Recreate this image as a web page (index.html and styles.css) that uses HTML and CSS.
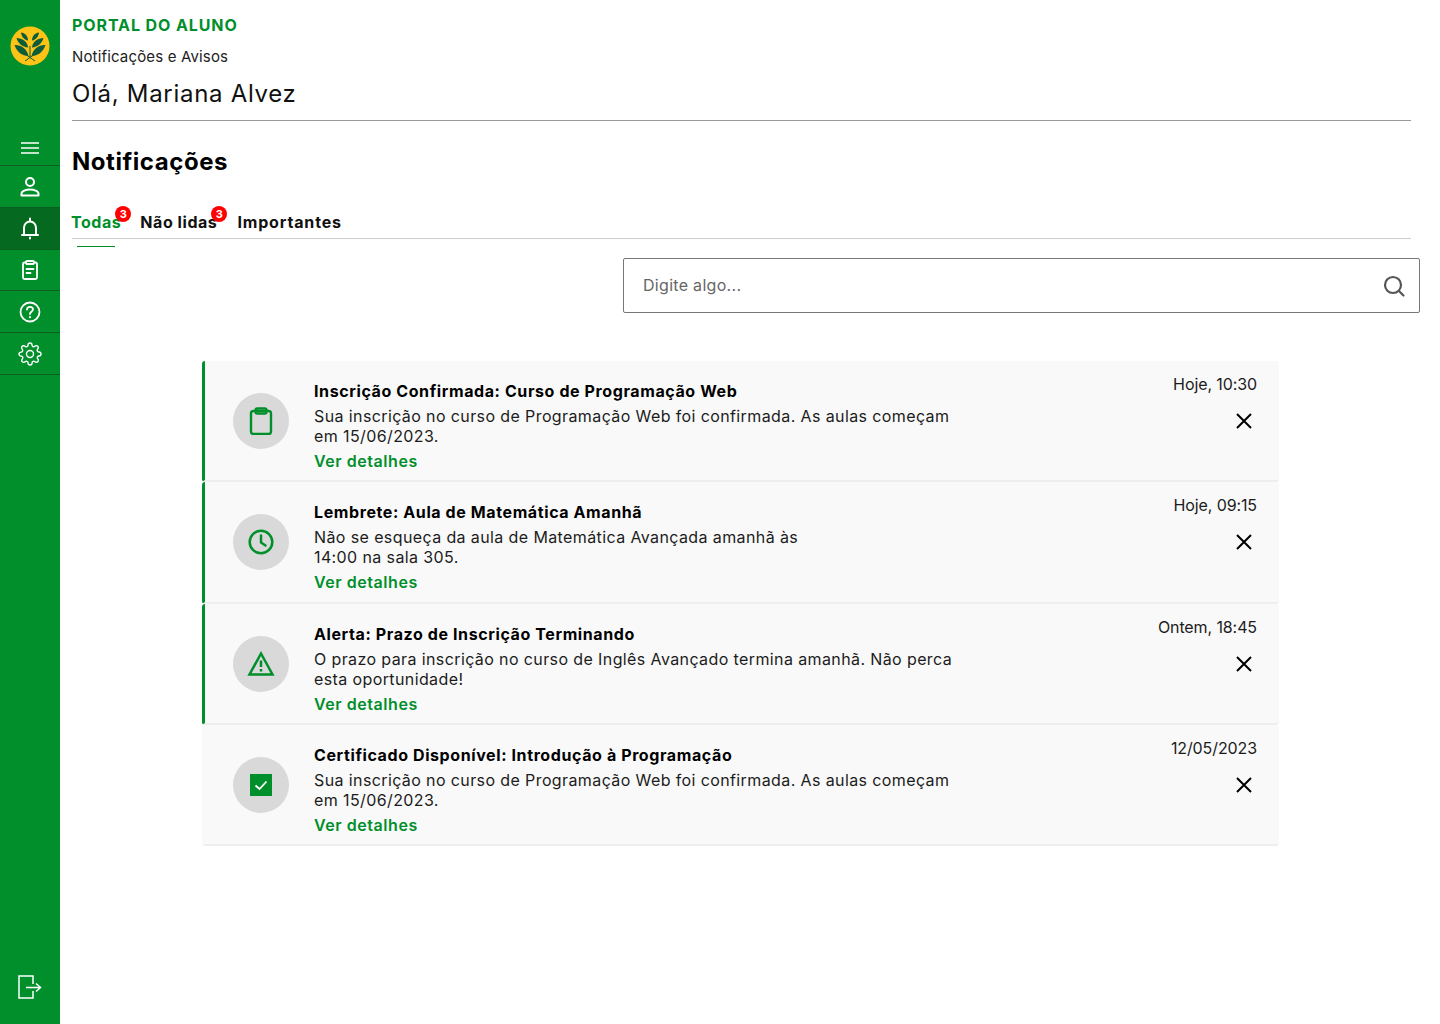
FILE: index.html
```html
<!DOCTYPE html>
<html lang="pt-BR">
<head>
  <meta charset="UTF-8">
  <title>Portal do Aluno - Notificações</title>
  <link rel="stylesheet" href="styles.css">
</head>
<body>
  <!-- barra lateral -->
  <aside class="sidebar">
    <div class="logo">
      <svg width="40" height="40" viewBox="0 0 40 40">
        <circle cx="20" cy="20" r="19.5" fill="#fdc316"/>
        <g fill="#0d5c3a">
          <path d="M18.500 30C12 30 7 26 4.500 19C10 18.500 17 22 18.500 30Z"/>
          <path d="M21.500 30C28 30 33 26 35.500 19C30 18.500 23 22 21.500 30Z"/>
          <path d="M18 21.500C12.500 21 8 17.500 6.500 12C12 12 17.500 15.500 18 21.500Z"/>
          <path d="M22 21.500C27.500 21 32 17.500 33.500 12C28 12 22.500 15.500 22 21.500Z"/>
          <path d="M18 14.500C14 14 11.500 10.500 11 6.500C15 7 18 10 18 14.500Z"/>
          <path d="M22 14.500C26 14 28.500 10.500 29 6.500C25 7 22 10 22 14.500Z"/>
        </g>
        <path d="M15 35L25 28M25 35L15 28M20 20V31" stroke="#0d5c3a" stroke-width="1" fill="none"/>
      </svg>
    </div>
    <nav class="side-nav">
      <a class="side-item side-menu">
        <svg width="20" height="14" viewBox="0 0 20 14"><path d="M1 2H19M1 7H19M1 12H19" stroke="#fff" stroke-width="1.700"/></svg>
      </a>
      <a class="side-item side-low">
        <svg width="24" height="24" viewBox="0 0 24 24" fill="none" stroke="#fff" stroke-width="2"><circle cx="12" cy="7" r="4"/><path d="M3.500 20.500V18.500C3.500 16 8 14.500 12 14.500S20.500 16 20.500 18.500V20.500Z" stroke-linejoin="round"/></svg>
      </a>
      <a class="side-item active">
        <svg width="24" height="24" viewBox="0 0 24 24" fill="none" stroke="#fff" stroke-width="2"><path d="M4 19H20M6 19V12C6 8.500 8.500 5.500 12 5.500S18 8.500 18 12V19" stroke-linecap="round"/><path d="M12 2.500V5M12 21.500V22.500" stroke-linecap="round"/></svg>
      </a>
      <a class="side-item">
        <svg width="24" height="24" viewBox="0 0 24 24" fill="none" stroke="#fff" stroke-width="1.800" stroke-linecap="round" stroke-linejoin="round"><path d="M8 4.500H6.500C5.500 4.500 5 5 5 6V19.500C5 20.500 5.500 21 6.500 21H17.500C18.500 21 19 20.500 19 19.500V6C19 5 18.500 4.500 17.500 4.500H16"/><rect x="8" y="3" width="8" height="3" rx="1"/><path d="M8.500 11H15.500M8.500 15H12.500"/></svg>
      </a>
      <a class="side-item">
        <svg width="24" height="24" viewBox="0 0 24 24" fill="none" stroke="#fff" stroke-width="1.800" stroke-linecap="round"><circle cx="12" cy="12" r="9.500"/><path d="M9 9.500C9 7.800 10.300 6.800 12 6.800S15 8 15 9.500C15 11.500 12 11.500 12 14"/><path d="M12 17V17.200" stroke-width="2.200"/></svg>
      </a>
      <a class="side-item side-low">
        <svg width="24" height="24" viewBox="0 0 24 24" fill="none" stroke="#fff" stroke-width="1.400" stroke-linecap="round" stroke-linejoin="round"><circle cx="12" cy="12" r="3.500"/><path d="M19.400 15a1.650 1.650 0 0 0 .33 1.820l.06.06a2 2 0 0 1 0 2.830 2 2 0 0 1-2.830 0l-.06-.06a1.650 1.650 0 0 0-1.820-.33 1.650 1.650 0 0 0-1 1.510V21a2 2 0 0 1-2 2 2 2 0 0 1-2-2v-.09A1.650 1.650 0 0 0 9 19.400a1.650 1.650 0 0 0-1.820.33l-.06.06a2 2 0 0 1-2.830 0 2 2 0 0 1 0-2.830l.06-.06a1.650 1.650 0 0 0 .33-1.820 1.650 1.650 0 0 0-1.510-1H3a2 2 0 0 1-2-2 2 2 0 0 1 2-2h.09A1.650 1.650 0 0 0 4.600 9a1.650 1.650 0 0 0-.33-1.820l-.06-.06a2 2 0 0 1 0-2.830 2 2 0 0 1 2.830 0l.06.06a1.650 1.650 0 0 0 1.820.33H9a1.650 1.650 0 0 0 1-1.510V3a2 2 0 0 1 2-2 2 2 0 0 1 2 2v.09a1.650 1.650 0 0 0 1 1.510 1.650 1.650 0 0 0 1.820-.33l.06-.06a2 2 0 0 1 2.830 0 2 2 0 0 1 0 2.830l-.06.06a1.650 1.650 0 0 0-.33 1.820V9a1.650 1.650 0 0 0 1.510 1H21a2 2 0 0 1 2 2 2 2 0 0 1-2 2h-.09a1.650 1.650 0 0 0-1.510 1z"/></svg>
      </a>
    </nav>
    <a class="side-logout">
      <svg width="24" height="24" viewBox="0 0 24 24" fill="none" stroke="#fff" stroke-width="1.500"><path d="M15 9V1H1V23H15V16"/><path d="M8 12.500H22M18 8.500L22.500 12.500L18 16.500"/></svg>
    </a>
  </aside>

  <main class="content">
    <header class="page-head">
      <div class="portal">PORTAL DO ALUNO</div>
      <div class="subtitle">Notificações e Avisos</div>
      <div class="hello">Olá, Mariana Alvez</div>
    </header>

    <h1>Notificações</h1>

    <div class="tabs">
      <a class="tab current">Todas<span class="badge">3</span></a>
      <a class="tab">Não lidas<span class="badge">3</span></a>
      <a class="tab tab-wide">Importantes</a>
    </div>
    <div class="tab-mark"></div>

    <div class="search">
      <span class="search-text">Digite algo...</span>
      <svg width="24" height="24" viewBox="0 0 24 24" fill="none" stroke="#555" stroke-width="2.200" stroke-linecap="round"><circle cx="11" cy="11" r="8"/><path d="M17 17L21.500 21.500"/></svg>
    </div>

    <!-- lista de notificações -->
    <section class="list">
      <article class="card unread">
        <div class="circle">
          <svg width="28" height="28" viewBox="0 0 28 28" fill="none" stroke="#008f2b" stroke-width="2.400" stroke-linejoin="round"><rect x="4" y="4" width="20" height="23" rx="2.500"/><rect x="8.500" y="1.500" width="11" height="5" rx="1.800"/></svg>
        </div>
        <div class="body">
          <h3>Inscrição Confirmada: Curso de Programação Web</h3>
          <p>Sua inscrição no curso de Programação Web foi confirmada. As aulas começam<br>em 15/06/2023.</p>
          <a class="more">Ver detalhes</a>
        </div>
        <div class="side">
          <time>Hoje, 10:30</time>
          <svg class="close" width="18" height="18" viewBox="0 0 18 18"><path d="M2 2L16 16M16 2L2 16" stroke="#000" stroke-width="2"/></svg>
        </div>
      </article>
      <article class="card unread">
        <div class="circle">
          <svg width="28" height="28" viewBox="0 0 28 28" fill="none" stroke="#008f2b" stroke-width="2.500" stroke-linecap="round" stroke-linejoin="round"><circle cx="14" cy="14" r="11.300"/><path d="M14 7.500V14.500L18.500 17.500"/></svg>
        </div>
        <div class="body">
          <h3>Lembrete: Aula de Matemática Amanhã</h3>
          <p>Não se esqueça da aula de Matemática Avançada amanhã às<br>14:00 na sala 305.</p>
          <a class="more">Ver detalhes</a>
        </div>
        <div class="side">
          <time>Hoje, 09:15</time>
          <svg class="close" width="18" height="18" viewBox="0 0 18 18"><path d="M2 2L16 16M16 2L2 16" stroke="#000" stroke-width="2"/></svg>
        </div>
      </article>
      <article class="card unread">
        <div class="circle">
          <svg width="28" height="28" viewBox="0 0 28 28" fill="none" stroke="#008f2b" stroke-width="2.500"><path d="M14 3.500L25.500 24.500H2.500Z"/><path d="M14 10.500V17M14 19V21.500"/></svg>
        </div>
        <div class="body">
          <h3>Alerta: Prazo de Inscrição Terminando</h3>
          <p>O prazo para inscrição no curso de Inglês Avançado termina amanhã. Não perca<br>esta oportunidade!</p>
          <a class="more">Ver detalhes</a>
        </div>
        <div class="side">
          <time>Ontem, 18:45</time>
          <svg class="close" width="18" height="18" viewBox="0 0 18 18"><path d="M2 2L16 16M16 2L2 16" stroke="#000" stroke-width="2"/></svg>
        </div>
      </article>
      <article class="card">
        <div class="circle">
          <svg width="22" height="22" viewBox="0 0 22 22"><rect width="22" height="22" fill="#008f2b"/><path d="M5.500 11.500L9.500 15L16.500 7.500" fill="none" stroke="#fff" stroke-width="1.800"/></svg>
        </div>
        <div class="body">
          <h3>Certificado Disponível: Introdução à Programação</h3>
          <p>Sua inscrição no curso de Programação Web foi confirmada. As aulas começam<br>em 15/06/2023.</p>
          <a class="more">Ver detalhes</a>
        </div>
        <div class="side">
          <time>12/05/2023</time>
          <svg class="close" width="18" height="18" viewBox="0 0 18 18"><path d="M2 2L16 16M16 2L2 16" stroke="#000" stroke-width="2"/></svg>
        </div>
      </article>
    </section>
  </main>
</body>
</html>
```

FILE: styles.css
```css
* {
  box-sizing: border-box;
}
body {
  margin: 0;
  height: 1024px;
  overflow: hidden;
  display: flex;
  font-family: "Inter", "Liberation Sans", sans-serif;
  background: #fff;
  color: #000;
}

/* barra lateral */
.sidebar {
  width: 60px;
  flex: none;
  background: #008f2b;
  display: flex;
  flex-direction: column;
}
.logo {
  height: 128px;
  padding-top: 26px;
  display: flex;
  justify-content: center;
  align-items: flex-start;
}
.side-nav {
  display: flex;
  flex-direction: column;
}
.side-item {
  height: 41.75px;
  display: flex;
  align-items: center;
  justify-content: center;
  border-bottom: 1px solid #0a5e20;
}
.side-menu {
  height: 38px;
  padding-top: 2px;
}
.side-low {
  padding-top: 2px;
}
.side-item.active {
  background: #05691f;
}
.side-logout {
  margin-top: auto;
  height: 74px;
  display: flex;
  align-items: center;
  justify-content: center;
}

/* conteúdo */
.content {
  flex: 1;
  min-width: 0;
  padding: 15px 20px 0 12px;
}
.page-head {
  width: 1339px;
  height: 106px;
  border-bottom: 1px solid #999;
}
.portal {
  color: #008f2b;
  font-size: 16px;
  font-weight: 700;
  line-height: 20px;
  letter-spacing: 0.9px;
}
.subtitle {
  margin-top: 12px;
  font-size: 15px;
  line-height: 20px;
  letter-spacing: 0.16px;
  color: #222;
}
.hello {
  margin-top: 12px;
  font-size: 24px;
  line-height: 30px;
  letter-spacing: 0.7px;
  color: #111;
}
h1 {
  margin: 25px 0 0;
  font-size: 24px;
  line-height: 32px;
  font-weight: 700;
  letter-spacing: 0.55px;
}

/* abas */
.tabs {
  width: 1339px;
  height: 28px;
  margin-top: 33px;
  display: flex;
  border-bottom: 1px solid #ccc;
}
.tab {
  position: relative;
  font-size: 16px;
  font-weight: 700;
  line-height: 22px;
  margin-right: 20px;
  letter-spacing: 0.55px;
  color: #111;
}
.tab:first-child {
  margin-left: -1px;
  margin-right: 19px;
}
.tab-wide {
  letter-spacing: 0.85px;
}
.tab.current {
  color: #008f2b;
}
.badge {
  position: absolute;
  top: -5px;
  right: -10px;
  width: 16px;
  height: 16px;
  border-radius: 50%;
  background: #f00;
  color: #fff;
  font-size: 11px;
  font-weight: 700;
  line-height: 16px;
  text-align: center;
  letter-spacing: 0;
}
.tab-mark {
  width: 38px;
  height: 1px;
  margin: 7px 0 0 5px;
  background: #008f2b;
}

/* busca */
.search {
  width: 797px;
  height: 55px;
  margin: 11px 0 0 551px;
  padding: 0 13px 0 19px;
  border: 1px solid #777;
  border-radius: 2px;
  display: flex;
  align-items: center;
  justify-content: space-between;
}
.search-text {
  font-size: 16px;
  line-height: 20px;
  margin-top: -2px;
  letter-spacing: 0.3px;
  color: #666;
}

/* lista */
.list {
  width: 1077px;
  margin: 48px 0 0 130px;
  display: flex;
  flex-direction: column;
}
.card {
  height: 121.3px;
  padding-left: 31px;
  background: #f9f9f9;
  border-left: 3px solid transparent;
  border-bottom: 2px solid #eee;
  border-radius: 3px;
  display: flex;
  position: relative;
}
.card.unread {
  border-left-color: #008f2b;
}
.circle {
  width: 56px;
  height: 56px;
  margin: 32px 25px 0 -3px;
  flex: none;
  border-radius: 50%;
  background: #d9d9d9;
  display: flex;
  align-items: center;
  justify-content: center;
}
.body {
  flex: 1;
  padding-top: 20px;
}
.body h3 {
  margin: 0;
  font-size: 16px;
  line-height: 21px;
  font-weight: 700;
  letter-spacing: 0.6px;
}
.body p {
  margin: 4px 0 0;
  font-size: 16px;
  line-height: 20px;
  letter-spacing: 0.39px;
  color: #1c1c1c;
}
.more {
  display: block;
  margin-top: 5px;
  font-size: 16px;
  line-height: 20px;
  font-weight: 600;
  letter-spacing: 0.55px;
  color: #008f2b;
}
.side {
  width: 150px;
  padding: 13px 22px 0 0;
  display: flex;
  flex-direction: column;
  align-items: flex-end;
}
.side time {
  font-size: 16px;
  line-height: 20px;
  letter-spacing: -0.1px;
  color: #1c1c1c;
}
.close {
  margin: 18px 4px 0 0;
}
```
